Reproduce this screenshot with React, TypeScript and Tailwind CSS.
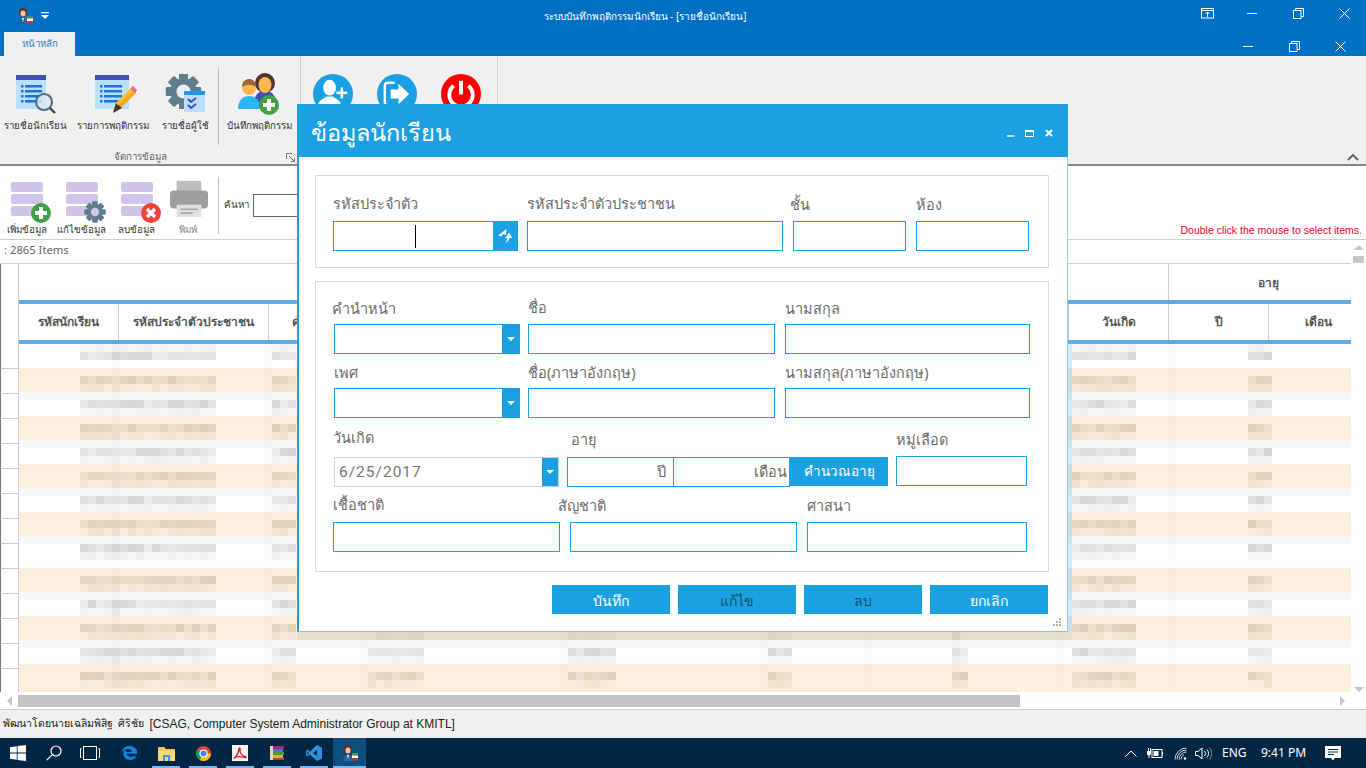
import React from "react";

const FONT = "font-['Noto_Sans','DejaVu_Sans',sans-serif]";

function Page({ pencil }: { pencil?: boolean }) {
  return (
    <svg width="42" height="40" viewBox="0 0 42 40">
      <rect x="0" y="0" width={pencil ? 34 : 30} height="34" fill="#bbdefb" />
      <rect x="0" y="0" width={pencil ? 34 : 30} height="5" fill="#3f51b5" />
      {[10, 15, 20, 25].map((y) => (
        <g key={y}>
          <rect x="5" y={y} width="2.5" height="2.5" fill="#1976d2" />
          <rect x="9" y={y} width={pencil ? 18 : 17} height="2.5" fill="#1976d2" />
        </g>
      ))}
      {pencil ? (
        <g>
          <polygon points="18,36 21,28 35,14 40,19 26,33" fill="#f9a825" />
          <polygon points="35,14 38,11 42,15 40,19" fill="#e57373" />
          <polygon points="18,38 21,28 27,33" fill="#4e342e" />
          <polygon points="21,28 35,14 37,16 23,30" fill="#fbc02d" />
        </g>
      ) : (
        <g>
          <circle cx="28" cy="27" r="8" fill="#dce8f2" fillOpacity="0.8" stroke="#546e7a" strokeWidth="2.2" />
          <line x1="34" y1="33" x2="39" y2="38" stroke="#37474f" strokeWidth="2.4" />
        </g>
      )}
    </svg>
  );
}

function Gear({ size = 42, color = "#607d8b", hole = "#f0f0f0" }: { size?: number; color?: string; hole?: string }) {
  const teeth = [0, 45, 90, 135, 180, 225, 270, 315];
  return (
    <svg width={size} height={size} viewBox="0 0 42 42">
      {teeth.map((a) => (
        <rect key={a} x="16" y="1" width="10" height="40" rx="1.5" fill={color} transform={`rotate(${a} 21 21)`} />
      ))}
      <circle cx="21" cy="21" r="15" fill={color} />
      <circle cx="21" cy="21" r="8" fill={hole} />
    </svg>
  );
}

function GearCheck() {
  return (
    <div className="relative w-[42px] h-[42px] ml-[1px]">
      <Gear size={37} hole="#eceff1" />
      <svg className="absolute left-[19px] top-[18px]" width="21" height="21" viewBox="0 0 21 21">
        <rect width="21" height="21" fill="#bbdefb" />
        <rect width="21" height="4" fill="#2196f3" />
        <path d="M4 8l3 3 5-4M4 14l3 3 5-4" stroke="#3f51b5" strokeWidth="2" fill="none" />
      </svg>
    </div>
  );
}

function PlusBadge() {
  return (
    <svg width="20" height="20" viewBox="0 0 20 20">
      <circle cx="10" cy="10" r="10" fill="#43a047" />
      <rect x="4" y="8" width="12" height="4" fill="#fff" />
      <rect x="8" y="4" width="4" height="12" fill="#fff" />
    </svg>
  );
}

function People() {
  return (
    <svg width="42" height="42" viewBox="0 0 42 42">
      <path d="M16 32c0-10 4-14 11-14s11 4 11 14z" fill="#3f51b5" />
      <ellipse cx="27" cy="10" rx="10" ry="10" fill="#4e342e" />
      <ellipse cx="27" cy="12" rx="6.5" ry="8" fill="#ffb74d" />
      <path d="M0 36c0-9 5-13 11-13s11 4 11 13z" fill="#29b6f6" />
      <circle cx="11" cy="15" r="7" fill="#ffb74d" />
      <path d="M4 14c0-6 4-8 7-8s7 2 7 8c-4-3-10-3-14 0z" fill="#a1662f" />
      <circle cx="31" cy="32" r="10" fill="#43a047" />
      <rect x="25" y="30" width="12" height="4" fill="#fff" />
      <rect x="29" y="26" width="4" height="12" fill="#fff" />
    </svg>
  );
}

function CircleBtn({ kind }: { kind: "add" | "exit" | "power" }) {
  const fill = kind === "power" ? "#f00" : "#1ba1e2";
  return (
    <svg width="40" height="40" viewBox="0 0 41 41">
      <circle cx="20.5" cy="20.5" r="20.5" fill={fill} />
      {kind === "add" && (
        <g fill="#fff">
          <ellipse cx="17" cy="14" rx="6.5" ry="8" />
          <path d="M4 34c2-8 7-9 10-11h6c3 2 8 3 10 11-7 5-19 5-26 0z" />
          <rect x="24" y="18" width="11" height="2.6" />
          <rect x="28.2" y="13.8" width="2.6" height="11" />
        </g>
      )}
      {kind === "exit" && (
        <g>
          <path d="M18 9h-7a3 3 0 0 0-3 3v17a3 3 0 0 0 3 3h7" stroke="#fff" strokeWidth="2.4" fill="none" />
          <polygon points="14,16 22,16 22,10 33,20.5 22,31 22,25 14,25" fill="#fff" />
        </g>
      )}
      {kind === "power" && (
        <g fill="none" stroke="#fff" strokeWidth="4">
          <path d="M13 12a12 12 0 1 0 15 0" />
          <line x1="20.5" y1="7" x2="20.5" y2="21" />
        </g>
      )}
    </svg>
  );
}

function RibbonItem({ w, label, children }: { w: number; label: string; children: React.ReactNode }) {
  return (
    <div className="flex flex-col items-center shrink-0" style={{ width: w }}>
      <div className="h-[44px] flex items-start justify-center">{children}</div>
      <div className="mt-[2px] text-[9.75px] leading-[14px] text-[#333] whitespace-nowrap">{label}</div>
    </div>
  );
}

function DbIcon({ badge, left = 20, top = 23 }: { badge: React.ReactNode; left?: number; top?: number }) {
  return (
    <div className="relative w-[42px] h-[38px]">
      <div className="flex flex-col gap-[2px] pt-[2px]">
        <div className="w-[32px] h-[10px] rounded-[2px] bg-[#d1c4e9]" />
        <div className="w-[32px] h-[10px] rounded-[2px] bg-[#d1c4e9]" />
        <div className="w-[32px] h-[10px] rounded-[2px] bg-[#d1c4e9]" />
      </div>
      <div className="absolute" style={{ left, top }}>{badge}</div>
    </div>
  );
}

function Printer() {
  return (
    <svg width="40" height="38" viewBox="0 0 42 38">
      <rect x="8" y="0" width="26" height="12" fill="#bdbdbd" />
      <rect x="1" y="10" width="40" height="19" rx="4" fill="#9e9e9e" />
      <rect x="8" y="25" width="26" height="13" fill="#e0e0e0" />
      <rect x="12" y="29" width="18" height="1.5" fill="#9e9e9e" />
      <rect x="12" y="33" width="13" height="1.5" fill="#9e9e9e" />
    </svg>
  );
}

function ToolItem({ w, label, dim, children }: { w: number; label: string; dim?: boolean; children: React.ReactNode }) {
  return (
    <div className="flex flex-col items-center shrink-0" style={{ width: w }}>
      <div className="h-[42px] w-[42px]">{children}</div>
      <div className={`mt-[1px] text-[9.75px] leading-[14px] whitespace-nowrap ${dim ? "text-[#888]" : "text-[#333]"}`}>{label}</div>
    </div>
  );
}

const BLOCKS: [number, number][] = [
  [80, 17],
  [272, 3],
  [368, 7],
  [568, 6],
  [768, 3],
  [952, 2],
  [1072, 8],
  [1248, 3],
];
const STRIPS = [112, 264, 360, 560, 760, 864, 952, 1056, 1168];

function rnd(a: number, b: number, c: number) {
  const v = (a * 73856093) ^ (b * 19349663) ^ (c * 83492791);
  return (((v >>> 0) * 2654435761) >>> 0) / 4294967296;
}

function Rows() {
  const rows = Array.from({ length: 14 }, (_, i) => i);
  return (
    <div className="h-[348px] overflow-hidden">
      {rows.map((i) => {
        const top = 344 + 25 * i;
        const q = Math.ceil(top / 8) * 8;
        const off = q - top;
        const tan = i % 2 === 1;
        return (
          <div key={i} className="relative h-[25px] flex">
            <div className="w-[19px] h-[25px] shrink-0 bg-white border-l border-l-[#777] border-r border-r-[#ccc] border-b border-b-[#ccc]" />
            <div className={`flex-1 h-[25px] ${tan ? "bg-[#fef0df]" : "bg-white"}`} />
            {i > 0 && (
              <div
                className={`absolute left-[19px] right-0 h-[8px] ${tan ? "bg-[#faeedf]" : "bg-[#f8f7f5]"}`}
                style={{ top: off - 8 }}
              />
            )}
            {STRIPS.map((x) => (
              <div
                key={x}
                className="absolute w-[8px] h-[24px] bg-black/[0.02]"
                style={{ left: x, top: off - (i > 0 ? 8 : 0) }}
              />
            ))}
            {BLOCKS.map(([x, n], b) =>
              Array.from({ length: n }, (_, j) => (
                <React.Fragment key={`${b}-${j}`}>
                  {[0, 1].map((s) => {
                    const strong = i === 0 ? s === 1 : s === 0;
                    const base = strong ? 0.1 : 0.03;
                    const alpha = base + rnd(i, b * 31 + j, s) * (strong ? 0.12 : 0.06);
                    const col = tan ? `rgba(110,85,60,${alpha})` : `rgba(70,70,80,${alpha})`;
                    return (
                      <div
                        key={s}
                        className="absolute w-[8px] h-[8px]"
                        style={{ left: x + j * 8, top: off + s * 8, backgroundColor: col }}
                      />
                    );
                  })}
                </React.Fragment>
              ))
            )}
          </div>
        );
      })}
    </div>
  );
}

function Head({ w, label, border = true, pad = 0 }: { w: number; label: string; border?: boolean; pad?: number }) {
  return (
    <div
      className={`shrink-0 h-full flex items-center justify-center text-[12px] font-bold text-[#555] whitespace-nowrap overflow-hidden box-border ${border ? "border-r border-r-[#ccc]" : ""}`}
      style={{ width: w, paddingLeft: pad }}
    >
      {label}
    </div>
  );
}

const inputCls = "block h-[30px] border border-[#1ba1e2] bg-white box-border";

function Label({ h, dx = 0, dy = 0, text }: { h: number; dx?: number; dy?: number; text: string }) {
  return (
    <div className="text-[14.5px] leading-[20px] text-[#6b6b6b] whitespace-nowrap" style={{ height: h, marginLeft: dx, transform: dy ? `translateY(${dy}px)` : undefined }}>
      {text}
    </div>
  );
}

function Combo({ w }: { w: number }) {
  return (
    <div className={`${inputCls} flex justify-end`} style={{ width: w }}>
      <div className="w-[17px] h-full bg-[#1ba1e2] flex items-center justify-center">
        <div className="w-0 h-0 border-l-[4px] border-r-[4px] border-t-[4px] border-l-transparent border-r-transparent border-t-white" />
      </div>
    </div>
  );
}

function Btn({ label, dark }: { label: string; dark?: boolean }) {
  return (
    <div className={`w-[118px] h-[29px] bg-[#1ba1e2] flex items-center justify-center pt-[1px] text-[14px] ${dark ? "text-[#124f6d]" : "text-white"}`}>
      {label}
    </div>
  );
}

function Dialog() {
  return (
    <div className="absolute left-[297px] top-[104px] w-[771px] h-[528px] flex flex-col bg-white">
      <div className="h-[53px] shrink-0 bg-[#1ba1e2] flex items-center pl-[14px]">
        <div className="pt-[3px] text-[23.5px] leading-[30px] text-white whitespace-nowrap">ข้อมูลนักเรียน</div>
        <div className="ml-auto flex items-center pr-[15px] pt-[5px]">
          <div className="w-[7px] h-[2px] mt-[6px] bg-[#d4d4d4]" />
          <div className="ml-[11px] w-[9px] h-[7px] border border-white border-t-2" />
          <svg className="ml-[11px]" width="8" height="8" viewBox="0 0 8 8">
            <path d="M1 1l6 6M7 1l-6 6" stroke="#fff" strokeWidth="2" />
          </svg>
        </div>
      </div>
      <div className="flex-1 flex flex-col border-l-2 border-l-[#1ba1e2] border-r border-r-[#8ccff0] border-b border-b-[#7cc6ee] relative">
        <div className="ml-[16px] mt-[18px] w-[734px] h-[93px] border border-[#d9d9d9] pt-[18px] pl-[17px] flex box-border">
          <div className="w-[185px] shrink-0">
            <Label h={27} dy={-1} text="รหัสประจำตัว" />
            <div className={`${inputCls} w-[185px] flex justify-end relative`}>
              <div className="absolute left-[81px] top-[3px] w-[1px] h-[23px] bg-black" />
              <div className="w-[24px] h-full bg-[#1ba1e2] flex items-center justify-center">
                <svg width="16" height="16" viewBox="0 0 16 16" fill="#fff">
                  <path d="M9.5 1L1 7.500l3 .8-1 3.200c.6-2.300 1.800-4.300 3.500-5.500L9 7z" />
                  <path d="M12 4.500l3.500 5.500-3 .1c-.6 2-2 3.900-4.500 5.400 1.300-1.500 2-3 2.200-5.400L8 10.200z" />
                </svg>
              </div>
            </div>
          </div>
          <div className="ml-[9px] w-[256px] shrink-0">
            <Label h={27} dy={-1} text="รหัสประจำตัวประชาชน" />
            <div className={`${inputCls} w-[256px]`} />
          </div>
          <div className="ml-[10px] w-[113px] shrink-0">
            <Label h={27} dx={-3} text="ชั้น" />
            <div className={`${inputCls} w-[113px]`} />
          </div>
          <div className="ml-[10px] w-[113px] shrink-0">
            <Label h={27} text="ห้อง" />
            <div className={`${inputCls} w-[113px]`} />
          </div>
        </div>

        <div className="ml-[16px] mt-[13px] w-[734px] h-[291px] border border-[#d9d9d9] pl-[17px] flex flex-col box-border">
          <div className="flex mt-[16px] pl-[1px]">
            <div className="w-[186px] shrink-0">
              <Label h={26} dx={-2} text="คำนำหน้า" />
              <Combo w={186} />
            </div>
            <div className="ml-[8px] w-[247px] shrink-0">
              <Label h={26} dy={-1} text="ชื่อ" />
              <div className={`${inputCls} w-[247px]`} />
            </div>
            <div className="ml-[10px] w-[245px] shrink-0">
              <Label h={26} text="นามสกุล" />
              <div className={`${inputCls} w-[245px]`} />
            </div>
          </div>
          <div className="flex mt-[8px] pl-[1px]">
            <div className="w-[186px] shrink-0">
              <Label h={26} text="เพศ" />
              <Combo w={186} />
            </div>
            <div className="ml-[8px] w-[247px] shrink-0">
              <Label h={26} text="ชื่อ(ภาษาอังกฤษ)" />
              <div className={`${inputCls} w-[247px]`} />
            </div>
            <div className="ml-[10px] w-[245px] shrink-0">
              <Label h={26} text="นามสกุล(ภาษาอังกฤษ)" />
              <div className={`${inputCls} w-[245px]`} />
            </div>
          </div>
          <div className="flex mt-[12px] pl-[1px]">
            <div className="w-[225px] shrink-0">
              <Label h={27} dx={-1} dy={-3} text="วันเกิด" />
              <div className="h-[30px] w-[225px] border border-[#cfcfcf] flex box-border">
                <div className="flex-1 pl-[4px] text-[15.5px] leading-[28px] tracking-[1px] text-[#777] font-['Roboto',sans-serif]">6/25/2017</div>
                <div className="w-[16px] h-full bg-[#1ba1e2] flex items-center justify-center">
                  <div className="w-0 h-0 border-l-[4px] border-r-[4px] border-t-[4px] border-l-transparent border-r-transparent border-t-white" />
                </div>
              </div>
            </div>
            <div className="ml-[8px] w-[321px] shrink-0">
              <Label h={27} dx={4} dy={-1} text="อายุ" />
              <div className="flex h-[30px]">
                <div className="w-[107px] border border-[#1ba1e2] flex items-center justify-end pr-[7px] text-[14.5px] text-[#666] box-border">ปี</div>
                <div className="w-[117px] border border-l-0 border-[#1ba1e2] flex items-center justify-end pr-[2px] text-[14.5px] text-[#666] box-border">เดือน</div>
                <div className="w-[98px] h-[29px] bg-[#1ba1e2] flex items-center justify-center text-[13.5px] text-white whitespace-nowrap">คำนวณอายุ</div>
              </div>
            </div>
            <div className="ml-[8px] w-[131px] shrink-0">
              <Label h={26} dy={-1} text="หมู่เลือด" />
              <div className={`${inputCls} w-[131px]`} />
            </div>
          </div>
          <div className="flex mt-[8px]">
            <div className="w-[227px] shrink-0">
              <Label h={27} dy={-1} text="เชื้อชาติ" />
              <div className={`${inputCls} w-[227px]`} />
            </div>
            <div className="ml-[10px] w-[227px] shrink-0">
              <Label h={27} dx={-12} text="สัญชาติ" />
              <div className={`${inputCls} w-[227px]`} />
            </div>
            <div className="ml-[10px] w-[220px] shrink-0">
              <Label h={27} text="ศาสนา" />
              <div className={`${inputCls} w-[220px]`} />
            </div>
          </div>
        </div>

        <div className="mt-[13px] flex justify-end gap-[8px] pr-[19px]">
          <Btn label="บันทึก" />
          <Btn label="แก้ไข" dark />
          <Btn label="ลบ" dark />
          <Btn label="ยกเลิก" />
        </div>
        <svg className="absolute right-[6px] bottom-[5px]" width="9" height="9" viewBox="0 0 9 9">
          <g fill="#b0b0b0">
            <rect x="7" y="1" width="2" height="2" />
            <rect x="4" y="4" width="2" height="2" />
            <rect x="7" y="4" width="2" height="2" />
            <rect x="1" y="7" width="2" height="2" />
            <rect x="4" y="7" width="2" height="2" />
            <rect x="7" y="7" width="2" height="2" />
          </g>
        </svg>
      </div>
    </div>
  );
}

function Restore() {
  return (
    <svg width="11" height="11" viewBox="0 0 11 11" fill="none" stroke="#fff">
      <rect x="0.5" y="2.5" width="7.5" height="8" />
      <path d="M2.5 2.5V0.5H10.5V8.5H8" />
    </svg>
  );
}
function Close() {
  return (
    <svg width="11" height="11" viewBox="0 0 11 11" stroke="#fff">
      <path d="M0.5 0.5l10 10M10.5 0.5l-10 10" />
    </svg>
  );
}

function AppIcon({ s = 16 }: { s?: number }) {
  return (
    <svg width={s} height={s} viewBox="0 0 16 16">
      <ellipse cx="6" cy="4.5" rx="4" ry="4.5" fill="#6d2b1f" />
      <ellipse cx="6" cy="5.5" rx="2.5" ry="3" fill="#f3c4a0" />
      <path d="M1 16c0-4 2-6 5-6s5 2 5 6z" fill="#2d5f9a" />
      <path d="M5 10h2l-1 4z" fill="#fff" />
      <rect x="10" y="8" width="6" height="2.5" fill="#3a9a50" />
      <rect x="10" y="10.5" width="6" height="2.5" fill="#fff" />
      <rect x="10" y="13" width="6" height="2.5" fill="#c0392b" />
    </svg>
  );
}

function TaskSlot({ run, children, w = 28, active }: { run?: boolean; children: React.ReactNode; w?: number; active?: boolean }) {
  return (
    <div className={`relative h-[30px] flex items-center justify-center shrink-0 ${active ? "bg-[#0e4f80]" : ""}`} style={{ width: w }}>
      {children}
      {run && <div className="absolute left-0 right-0 bottom-0 h-[2px] bg-[#76b9ed]" />}
    </div>
  );
}

export default function App() {
  return (
    <div className={`relative w-[1366px] h-[768px] overflow-hidden flex flex-col bg-white ${FONT}`}>
      {/* title bar */}
      <div className="h-[32px] shrink-0 bg-[#0170c4] flex items-center relative">
        <div className="ml-[17px]"><AppIcon /></div>
        <svg className="ml-[8px]" width="8" height="8" viewBox="0 0 8 8">
          <rect x="0" y="0" width="8" height="1.2" fill="#fff" />
          <polygon points="0,3 8,3 4,7" fill="#fff" />
        </svg>
        <div className="absolute left-0 w-[1290px] text-center text-[10px] leading-[14px] text-white">ระบบบันทึกพฤติกรรมนักเรียน - [รายชื่อนักเรียน]</div>
        <div className="ml-auto flex items-center pr-[16px] -mt-[5px]">
          <svg width="13" height="11" viewBox="0 0 13 11" fill="none" stroke="#fff">
            <rect x="0.5" y="0.5" width="12" height="9.5" />
            <line x1="0.5" y1="2.5" x2="12.5" y2="2.5" />
            <path d="M6.5 9V4.5M4.5 6l2-2 2 2" />
          </svg>
          <div className="ml-[33px] w-[10px] h-[1px] bg-white" />
          <div className="ml-[36px]"><Restore /></div>
          <div className="ml-[35px]"><Close /></div>
        </div>
      </div>
      {/* tab row */}
      <div className="h-[24px] shrink-0 bg-[#0170c4] flex">
        <div className="ml-[4px] w-[71px] h-full bg-[#f0f0f0] flex items-center justify-center text-[9.75px] text-[#2a7fc9]">หน้าหลัก</div>
        <div className="ml-auto flex items-center pr-[20px] mt-[4px]">
          <div className="w-[10px] h-[1px] bg-white" />
          <div className="ml-[36px]"><Restore /></div>
          <div className="ml-[35px]"><Close /></div>
        </div>
      </div>
      {/* ribbon */}
      <div className="h-[110px] shrink-0 bg-[#f0f0f0] border-b-2 border-b-[#888] flex relative box-border">
        <div className="w-[301px] h-full flex flex-col border-r border-r-[#d4d4d4] shrink-0 relative">
          <div className="flex pt-[17px] h-[94px]">
            <RibbonItem w={70} label="รายชื่อนักเรียน"><div className="ml-[4px] mt-[2px]"><Page /></div></RibbonItem>
            <RibbonItem w={86} label="รายการพฤติกรรม"><div className="ml-[6px] mt-[2px]"><Page pencil /></div></RibbonItem>
            <RibbonItem w={59} label="รายชื่อผู้ใช้"><GearCheck /></RibbonItem>
            <div className="w-[1px] h-[78px] -mt-[6px] ml-[3px] bg-[#bdbdbd] shrink-0" />
            <RibbonItem w={81} label="บันทึกพฤติกรรม"><div className="-ml-[2px]"><People /></div></RibbonItem>
          </div>
          <div className="w-[280px] text-center text-[9.75px] leading-[14px] text-[#666]">จัดการข้อมูล</div>
          <svg className="absolute left-[286px] top-[97px]" width="9" height="9" viewBox="0 0 9 9" fill="none" stroke="#777">
            <path d="M0.5 6V0.5H6" />
            <path d="M3 3l5 5M8.5 5v3.5H5" />
          </svg>
        </div>
        <div className="w-[197px] h-full border-r border-r-[#d4d4d4] flex pt-[18px] pl-[12px] gap-[24px] shrink-0">
          <CircleBtn kind="add" />
          <CircleBtn kind="exit" />
          <CircleBtn kind="power" />
        </div>
        <svg className="absolute right-[7px] bottom-[3px]" width="12" height="7" viewBox="0 0 12 7" fill="none" stroke="#666" strokeWidth="2">
          <path d="M1 6l5-5 5 5" />
        </svg>
      </div>
      {/* toolbar */}
      <div className="h-[74px] shrink-0 flex items-start border-b border-b-[#d0d0d0] pt-[14px] relative box-border">
        <ToolItem w={53} label="เพิ่มข้อมูล"><div className="ml-[5px]"><DbIcon badge={<PlusBadge />} /></div></ToolItem>
        <ToolItem w={57} label="แก้ไขข้อมูล"><div className="ml-[5px]"><DbIcon left={18} top={21} badge={<Gear size={22} hole="#d1c4e9" />} /></div></ToolItem>
        <ToolItem w={52} label="ลบข้อมูล">
          <div className="ml-[6px]">
            <DbIcon
              badge={
                <svg width="20" height="20" viewBox="0 0 20 20">
                  <circle cx="10" cy="10" r="10" fill="#f44336" />
                  <path d="M6 6l8 8M14 6l-8 8" stroke="#fff" strokeWidth="3.4" />
                </svg>
              }
            />
          </div>
        </ToolItem>
        <ToolItem w={52} label="พิมพ์" dim><div className="ml-[2px]"><Printer /></div></ToolItem>
        <div className="ml-[4px] -mt-[3px] w-[1px] h-[57px] bg-[#c4c4c4] shrink-0" />
        <div className="ml-[5px] mt-[18px] text-[9.75px] leading-[14px] text-[#333] whitespace-nowrap">ค้นหา</div>
        <div className="ml-[4px] mt-[14px] w-[200px] h-[23px] border border-[#666] bg-white" />
        <div className="ml-auto mt-[43px] pr-[4px] text-[10.5px] leading-[14px] text-[#f0002a] whitespace-nowrap font-['Liberation_Sans',sans-serif]">Double click the mouse to select items.</div>
      </div>
      {/* table */}
      <div className="flex shrink-0 h-[452px]">
        <div className="w-[1351px] flex flex-col shrink-0">
          <div className="h-[24px] shrink-0 border-b border-b-[#d0d0d0] pl-[4px] text-[11.25px] leading-[20px] text-[#666] box-border">: 2865 Items</div>
          <div className="h-[36px] shrink-0 flex">
            <div className="w-[19px] h-full border-l border-l-[#777] border-r border-r-[#ccc] shrink-0" />
            <div className="w-[1150px] h-full border-r border-r-[#ccc] shrink-0" />
            <div className="w-[182px] h-full pt-[1px]"><Head w={182} pad={16} label="อายุ" border={false} /></div>
          </div>
          <div className="h-[4px] shrink-0 flex">
            <div className="w-[19px] border-l border-l-[#777] border-r border-r-[#ccc] shrink-0" />
            <div className="flex-1 bg-[#5dacdf]" />
          </div>
          <div className="h-[36px] shrink-0 flex">
            <div className="w-[19px] h-full border-l border-l-[#777] border-r border-r-[#ccc] shrink-0" />
            <Head w={100} label="รหัสนักเรียน" />
            <Head w={150} label="รหัสประจำตัวประชาชน" />
            <Head w={100} label="คำนำหน้า" />
            <Head w={200} label="ชื่อ" />
            <Head w={200} label="นามสกุล" />
            <Head w={200} label="ชื่อ(ภาษาอังกฤษ)" />
            <Head w={100} label="เพศ" />
            <Head w={100} label="วันเกิด" />
            <Head w={100} label="ปี" />
            <Head w={83} pad={16} label="เดือน" border={false} />
          </div>
          <div className="h-[4px] shrink-0 flex">
            <div className="w-[19px] border-l border-l-[#777] border-r border-r-[#ccc] shrink-0" />
            <div className="flex-1 bg-[#5dacdf]" />
          </div>
          <Rows />
        </div>
        <div className="w-[15px] h-full flex flex-col items-center pt-[5px] shrink-0">
          <div className="w-0 h-0 border-l-[5px] border-r-[5px] border-b-[5px] border-l-transparent border-r-transparent border-b-[#c4c4c4]" />
          <div className="mt-[6px] w-[11px] h-[7px] bg-[#c4c4c4]" />
          <div className="mt-[424px] w-0 h-0 border-l-[5px] border-r-[5px] border-t-[5px] border-l-transparent border-r-transparent border-t-[#c4c4c4]" />
        </div>
      </div>
      {/* horizontal scroll */}
      <div className="h-[17px] shrink-0 flex items-start pt-[3px]">
        <div className="ml-[7px] mt-[1px] w-0 h-0 border-t-[5px] border-b-[5px] border-r-[5px] border-t-transparent border-b-transparent border-r-[#c4c4c4]" />
        <div className="ml-[6px] w-[1002px] h-[12px] bg-[#c3c3c3]" />
        <div className="ml-[320px] mt-[1px] w-0 h-0 border-t-[5px] border-b-[5px] border-l-[5px] border-t-transparent border-b-transparent border-l-[#c4c4c4]" />
      </div>
      {/* status */}
      <div className="h-[29px] shrink-0 bg-[#f0f0f0] border-t border-t-[#d0d0d0] flex items-center pl-[3px] text-[#222] whitespace-nowrap box-border">
        <span className="text-[10.5px]">พัฒนาโดยนายเฉลิมพิสิฐ&nbsp; ศิริชัย</span>
        <span className="ml-[5px] text-[12px] font-['Liberation_Sans',sans-serif]">[CSAG, Computer System Administrator Group at KMITL]</span>
      </div>
      {/* taskbar */}
      <div className="h-[30px] shrink-0 bg-[#022644] flex items-center relative">
        <svg className="ml-[10px]" width="16" height="16" viewBox="0 0 16 16" fill="#fff">
          <polygon points="0,2.2 6.8,1.2 6.8,7.6 0,7.6" />
          <polygon points="7.6,1.1 16,0 16,7.6 7.6,7.6" />
          <polygon points="0,8.4 6.8,8.4 6.8,14.8 0,13.8" />
          <polygon points="7.6,8.4 16,8.4 16,16 7.6,14.9" />
        </svg>
        <svg className="ml-[20px]" width="16" height="16" viewBox="0 0 16 16" fill="none" stroke="#fff" strokeWidth="1.2">
          <circle cx="10" cy="6" r="5" />
          <line x1="6.4" y1="9.6" x2="0.8" y2="15.2" />
        </svg>
        <svg className="ml-[18px]" width="20" height="14" viewBox="0 0 20 14" fill="none" stroke="#fff">
          <rect x="3.5" y="0.5" width="13" height="13" />
          <path d="M1.5 2.5H0.5V11.5H1.5M18.5 2.5H19.5V11.5H18.5" />
        </svg>
        <div className="ml-[15px] flex items-center">
          <TaskSlot>
            <svg width="16" height="16" viewBox="0 0 16 16">
              <path d="M8.2 1C3.6 1 .9 4.4.4 8c1.6-2.6 4-4 6.4-4 2.2 0 3.8 1.3 3.9 3H5.2C5 5.6 4 5 3.3 5.4 2.6 6.4 2.4 7.6 2.4 8.8c0 3.8 3 6.2 6.6 6.2 2.1 0 3.9-.6 5.5-1.8v-3c-1.4 1-3 1.6-4.9 1.6-2 0-3.9-1-4-3h10.2c.1-.6.2-1.2.2-1.8C15.8 3.4 12.6 1 8.2 1z" fill="#1283e3" />
            </svg>
          </TaskSlot>
          <div className="ml-[9px]">
            <TaskSlot run>
              <svg width="17" height="15" viewBox="0 0 17 15">
                <path d="M0 1h6l2 2h9v12H0z" fill="#f5c75b" />
                <rect x="0" y="5" width="17" height="10" fill="#ffd978" />
                <rect x="5" y="9" width="7" height="6" fill="#2f9ae0" />
                <rect x="7" y="11" width="3" height="4" fill="#ffd978" />
              </svg>
            </TaskSlot>
          </div>
          <div className="ml-[9px]">
            <TaskSlot run>
              <svg width="15" height="15" viewBox="0 0 32 32">
                <circle cx="16" cy="16" r="16" fill="#db4437" />
                <path d="M16 16L2.2 8A16 16 0 0 0 8 29.8z" fill="#0f9d58" />
                <path d="M16 16l-8 13.8A16 16 0 0 0 32 16z" fill="#fbbc05" />
                <circle cx="16" cy="16" r="7.5" fill="#4285f4" stroke="#fff" strokeWidth="2.5" />
              </svg>
            </TaskSlot>
          </div>
          <div className="ml-[9px]">
            <TaskSlot run>
              <svg width="16" height="16" viewBox="0 0 16 16">
                <rect width="16" height="16" fill="#f4f4f4" />
                <path d="M2 13c2-1 4-4 5-9 .3-2 1.5-1 1 1-.5 3 2 6 5.500 6.500 1 .2.800 1.300-.5 1-3-.5-6-1.500-8.500-.5-1.500.8-2.500 1.500-2.500 1z" fill="none" stroke="#d32222" strokeWidth="1.3" />
              </svg>
            </TaskSlot>
          </div>
          <div className="ml-[9px]">
            <TaskSlot run>
              <svg width="16" height="16" viewBox="0 0 16 16">
                <rect x="3" y="1" width="12" height="3" fill="#8e2a86" />
                <rect x="2" y="4" width="12" height="3" fill="#3a7fd0" />
                <rect x="3" y="7" width="12" height="3" fill="#3aa24a" />
                <rect x="2" y="10" width="12" height="3" fill="#e0b030" />
                <rect x="3" y="13" width="12" height="2" fill="#c03a3a" />
                <rect x="1" y="1" width="3" height="14" fill="#e8d9a0" />
              </svg>
            </TaskSlot>
          </div>
          <div className="ml-[9px]">
            <TaskSlot run>
              <svg width="16" height="16" viewBox="0 0 16 16" fill="#2f8fdb">
                <polygon points="11,0 16,2.5 16,13.5 11,16 4,9.5 1.5,11.5 0,10.5 0,5.5 1.5,4.5 4,6.5" />
                <polygon points="11,5 7,8 11,11" fill="#022644" />
                <polygon points="1.5,6 3,8 1.5,10" fill="#022644" />
              </svg>
            </TaskSlot>
          </div>
          <div className="ml-[5px]">
            <TaskSlot run active w={33}><AppIcon /></TaskSlot>
          </div>
        </div>
        <div className="ml-auto flex items-center text-white pr-[25px]">
          <svg width="12" height="7" viewBox="0 0 12 7" fill="none" stroke="#fff">
            <path d="M0.5 6.5l5.5-5.5 5.5 5.5" />
          </svg>
          <svg className="ml-[10px]" width="16" height="11" viewBox="0 0 16 11" fill="#fff">
            <rect x="5" y="1.5" width="10" height="8" fill="none" stroke="#fff" />
            <rect x="6.5" y="3" width="5" height="5" />
            <rect x="15" y="4" width="1" height="3" />
            <path d="M0 3h4v2.5A2 2 0 0 1 2.5 7.5V10h-1V7.5A2 2 0 0 1 0 5.5zM1 0h1v3H1zM3 0h1v3H3z" />
          </svg>
          <svg className="ml-[11px]" width="13" height="13" viewBox="0 0 13 13" fill="none" stroke="#fff" strokeWidth="0.8">
            <path d="M1 12.5a11.5 11.5 0 0 1 11.5-11.5M3 12.5a9.5 9.5 0 0 1 9.5-9.5M5 12.5a7.5 7.5 0 0 1 7.5-7.5M7 12.5a5.5 5.5 0 0 1 3-4.9" />
            <circle cx="11" cy="11.5" r="1.2" fill="#fff" stroke="none" />
          </svg>
          <svg className="ml-[8px]" width="17" height="13" viewBox="0 0 17 13" fill="none" stroke="#fff">
            <path d="M0.5 4.5h2.5l4-3.5v11l-4-3.5H0.5z" />
            <path d="M9.5 4a3.5 3.5 0 0 1 0 5M12 2.5a6 6 0 0 1 0 8" />
            <path d="M14.5 0.5a10 10 0 0 1 0 12" stroke="#7a8b99" />
          </svg>
          <div className="ml-[10px] text-[12px] leading-[16px] w-[24px] whitespace-nowrap">ENG</div>
          <div className="ml-[15px] text-[12px] leading-[16px] w-[43px] whitespace-nowrap">9:41 PM</div>
          <svg className="ml-[21px]" width="16" height="15" viewBox="0 0 16 15">
            <path d="M0 0h16v12h-6l-2 2.5-2-2.5H0z" fill="#fff" />
            <path d="M3 3.5h10M3 6h10M3 8.5h6" stroke="#022644" />
          </svg>
        </div>
      </div>

      {/* dialog glow and dialog */}
      <div className="absolute left-[297px] top-[632px] w-[775px] h-[8px] bg-[#5f9070]/15" />
      <div className="absolute left-[1068px] top-[341px] w-[4px] h-[291px] bg-[#6ab8ee]/30" />
      <Dialog />
    </div>
  );
}
